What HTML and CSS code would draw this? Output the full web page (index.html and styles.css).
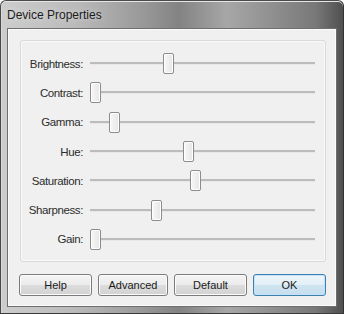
FILE: index.html
```html
<!DOCTYPE html>
<html>
<head>
<meta charset="utf-8">
<link rel="stylesheet" href="styles.css">
</head>
<body>
<div class="window">
  <div class="titlebar"><span class="title">Device Properties</span></div>
  <div class="client">
    <div class="group">
      <div class="row"><span class="label">Brightness:</span><div class="slider"><div class="track"></div><div class="thumb" style="left:73px"></div></div></div>
      <div class="row"><span class="label">Contrast:</span><div class="slider"><div class="track"></div><div class="thumb" style="left:0px"></div></div></div>
      <div class="row"><span class="label">Gamma:</span><div class="slider"><div class="track"></div><div class="thumb" style="left:19px"></div></div></div>
      <div class="row"><span class="label">Hue:</span><div class="slider"><div class="track"></div><div class="thumb" style="left:93px"></div></div></div>
      <div class="row"><span class="label">Saturation:</span><div class="slider"><div class="track"></div><div class="thumb" style="left:100px"></div></div></div>
      <div class="row"><span class="label">Sharpness:</span><div class="slider"><div class="track"></div><div class="thumb" style="left:61px"></div></div></div>
      <div class="row"><span class="label">Gain:</span><div class="slider"><div class="track"></div><div class="thumb" style="left:0px"></div></div></div>
    </div>
    <div class="buttons">
      <button class="btn">Help</button>
      <button class="btn btn-adv">Advanced</button>
      <button class="btn">Default</button>
      <button class="btn btn-ok">OK</button>
    </div>
  </div>
</div>
</body>
</html>
```
FILE: styles.css
```css
html, body {
  margin: 0;
  padding: 0;
  background: #ffffff;
}
body {
  width: 344px;
  height: 314px;
  overflow: hidden;
  font-family: "Liberation Sans", Arial, sans-serif;
}
.window {
  box-sizing: border-box;
  width: 344px;
  height: 314px;
  border: 1px solid #4a4a4a;
  border-bottom-color: #3a3a3a;
  border-right-color: #333333;
  border-radius: 6px 6px 0 0;
  background: linear-gradient(to right, #cdcdcd 0%, #bababa 22%, #989898 42%, #838383 52%, #a7a7a7 66%, #929292 78%, #787878 92%, #505050 100%);
  display: flex;
  flex-direction: column;
  padding: 0 6px 6px 6px;
  box-shadow: inset 0 1px 0 #e6e6e6, inset 1px 0 0 #d8d8d8;
}
.titlebar {
  height: 27px;
  display: flex;
  align-items: center;
}
.title {
  font-size: 12px;
  color: #1c1c1c;
  margin-top: 1px;
  text-shadow: 0 0 6px rgba(255,255,255,0.6);
}
.client {
  flex: 1;
  background: #f0f0f0;
  border: 1px solid #6e6e6e;
  box-shadow: inset 0 0 0 1px #fbfbfb;
  display: flex;
  flex-direction: column;
  padding: 11px 0 0 12px;
}
.group {
  box-sizing: border-box;
  width: 306px;
  height: 222px;
  border: 1px solid #d9d9d9;
  border-radius: 3px;
  box-shadow: inset 0 0 0 1px #fafafa;
  padding-top: 8px;
  display: flex;
  flex-direction: column;
}
.row {
  height: 29.3px;
  display: grid;
  grid-template-columns: 62px 225px;
  column-gap: 7px;
  align-items: center;
}
.label {
  text-align: right;
  font-size: 11.5px;
  letter-spacing: -0.4px;
  color: #2c2c2c;
}
.slider {
  position: relative;
  height: 21px;
}
.track {
  position: absolute;
  left: 0;
  right: 0;
  top: 9px;
  height: 2px;
  background: #bcbcbc;
  border-bottom: 1px solid #e8e8e8;
}
.thumb {
  position: absolute;
  top: 0;
  box-sizing: border-box;
  width: 11px;
  height: 21px;
  border: 1px solid #8c8c8c;
  border-radius: 2px;
  background: linear-gradient(to right, #f7f7f7, #e6e6e6);
  box-shadow: inset 0 0 0 1px #ffffff;
}
.buttons {
  display: flex;
  gap: 6px;
  margin-top: 12px;
  margin-left: -1px;
}
.btn {
  box-sizing: border-box;
  width: 73px;
  height: 22px;
  border: 1px solid #7b7b7b;
  border-radius: 3px;
  background: linear-gradient(to bottom, #f4f4f4 0%, #ececec 48%, #dcdcdc 52%, #d2d2d2 100%);
  box-shadow: inset 0 0 0 1px #fcfcfc;
  font-family: "Liberation Sans", Arial, sans-serif;
  font-size: 11px;
  color: #1a1a1a;
  padding: 0;
}
.btn-adv {
  width: 70px;
}
.btn-ok {
  border-color: #3c7fb1;
  background: linear-gradient(to bottom, #eef6fb 0%, #e3eff7 48%, #cfe4f1 52%, #c6deee 100%);
  box-shadow: inset 0 0 0 1px #c4e3f8;
}
```
